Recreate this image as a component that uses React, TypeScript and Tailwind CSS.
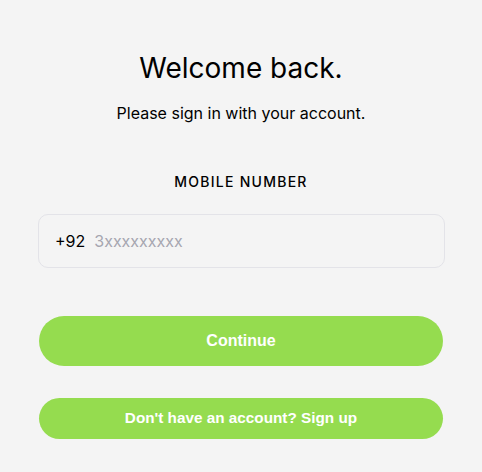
import React from "react";

export default function App() {
  return (
    <div className="min-h-screen bg-[#f4f4f4] px-[38px] pt-[48px] font-['Inter',sans-serif]">
      <h1 className="text-center text-[28px] leading-[40px] font-normal text-black">Welcome back.</h1>
      <p className="mt-[13px] text-center text-[16px] leading-[24px] text-black">Please sign in with your account.</p>
      <div className="mt-[47px] text-center text-[14px] leading-[20px] font-medium tracking-[0.09em] text-black">MOBILE NUMBER</div>
      <div className="mr-[-1px] mt-[22px] flex h-[54px] items-center rounded-[10px] border border-[#e3e3e8] px-[16px]">
        <span className="text-[16px] text-black">+92</span>
        <input
          className="ml-[9px] min-w-0 flex-1 bg-transparent text-[16px] outline-none placeholder:text-[#a6a6b0] font-['Inter',sans-serif]"
          placeholder="3xxxxxxxxx"
        />
      </div>
      <button className="mx-px mt-[48px] flex h-[50px] w-[calc(100%-2px)] items-center justify-center rounded-full bg-[#95dc4f] text-[16px] font-bold text-white font-['Liberation_Sans',Arial,sans-serif]">
        Continue
      </button>
      <button className="mx-px mt-[32px] flex h-[41px] w-[calc(100%-2px)] items-center justify-center rounded-full bg-[#95dc4f] text-[15.3px] font-bold text-white font-['Liberation_Sans',Arial,sans-serif]">
        Don't have an account? Sign up
      </button>
    </div>
  );
}
